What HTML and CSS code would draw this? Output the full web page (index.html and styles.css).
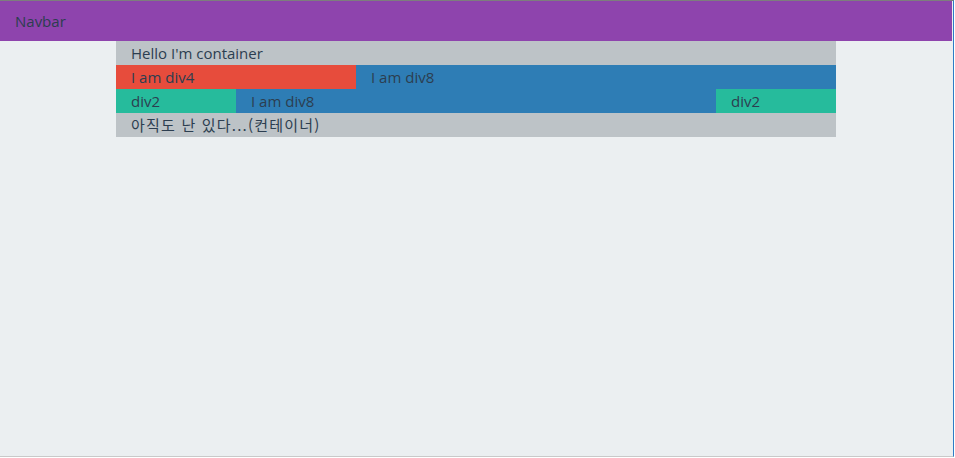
FILE: index.html
```html
<!DOCTYPE html>
<html lang="ko">
<head>
<meta charset="utf-8">
<title>Grid</title>
<link rel="stylesheet" href="styles.css">
</head>
<body>
<div class="frame">
  <nav class="navbar">Navbar</nav>
  <div class="container">
    <div class="row grey">Hello I'm container</div>
    <div class="row">
      <div class="col col-4 red">I am div4</div>
      <div class="col col-8 blue">I am div8</div>
    </div>
    <div class="row">
      <div class="col col-2 green">div2</div>
      <div class="col col-8 blue">I am div8</div>
      <div class="col col-2 green">div2</div>
    </div>
    <div class="row grey"><span class="ko">아직도 난 있다...(컨테이너)</span></div>
  </div>
</div>
</body>
</html>
```
FILE: styles.css
```css
html, body {
  margin: 0;
  padding: 0;
  background: #ffffff;
}
body {
  font-family: "Open Sans", "Noto Sans", "Noto Sans CJK KR", sans-serif;
  font-size: 15px;
  line-height: 24px;
  color: #2c3e50;
}
.frame {
  box-sizing: border-box;
  width: 954px;
  height: 457px;
  padding-right: 1px;
  background: #ebeff1;
  border-top: 1px solid #7d7d7d;
  border-right: 1px solid #2e7cc6;
  border-bottom: 1px solid #c9c9c9;
}
.navbar {
  background: #8e44ad;
  padding: 8px 15px;
  height: 24px;
}
.container {
  width: 720px;
  margin: 0 auto;
}
.row {
  display: flex;
  height: 24px;
}
.row.grey {
  background: #bdc3c7;
  padding: 0 15px;
}
.ko {
  font-family: "Noto Sans CJK KR", "Open Sans", sans-serif;
  letter-spacing: 1.2px;
}
.col {
  box-sizing: border-box;
  padding: 0 15px;
}
.col-2 { width: 120px; }
.col-4 { width: 240px; }
.col-8 { width: 480px; }
.red { background: #e74c3c; }
.blue { background: #2e7db5; }
.green { background: #26bb9c; }
```
